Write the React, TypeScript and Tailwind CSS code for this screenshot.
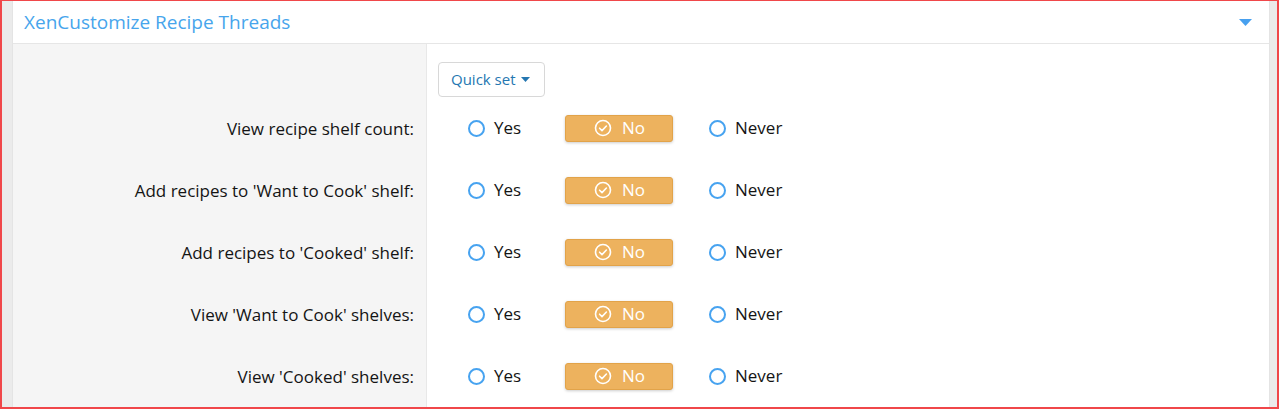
import React from 'react';

const rows = [
  "View recipe shelf count:",
  "Add recipes to 'Want to Cook' shelf:",
  "Add recipes to 'Cooked' shelf:",
  "View 'Want to Cook' shelves:",
  "View 'Cooked' shelves:",
];

const Radio = ({ label }: { label: string }) => (
  <div className="flex items-center gap-[9px]">
    <span className="w-[17px] h-[17px] rounded-full border-2 border-[#47a3f0] bg-white" />
    <span className="text-[#141414]">{label}</span>
  </div>
);

const CheckCircle = () => (
  <svg width="18" height="18" viewBox="0 0 18 18" fill="none" stroke="white" strokeWidth="1.6">
    <circle cx="9" cy="9" r="7.5" />
    <path d="M5.6 9.2l2.4 2.4 4.4-4.6" strokeLinecap="round" strokeLinejoin="round" />
  </svg>
);

const App = () => {
  return (
    <div
      className="w-[1279px] h-[409px] overflow-hidden bg-[#ebebeb] border-t border-l-2 border-r-2 border-b-2 border-[#f0474a] pl-[10px] pr-[7px]"
      style={{ fontFamily: '"Open Sans", "Noto Sans", sans-serif' }}
    >
      <div className="h-full bg-white border-x border-[#e4e4e4] flex flex-col">
        <div className="h-[43px] flex items-center justify-between border-b border-[#e6e6e6] pl-[11px] pr-[17px] shrink-0">
          <h2 className="text-[19px] text-[#47a5ec]">XenCustomize Recipe Threads</h2>
          <svg width="13" height="7" viewBox="0 0 13 7">
            <path d="M0 0h13L6.5 7z" fill="#47a0ef" />
          </svg>
        </div>
        <div className="flex flex-1 text-[17px]">
          <div className="w-[414px] bg-[#f5f5f5] border-r border-[#e8e8e8] flex flex-col pt-[54px] pr-[12px]">
            {rows.map((r) => (
              <div key={r} className="h-[62px] flex items-center justify-end text-[#141414]">
                {r}
              </div>
            ))}
          </div>
          <div className="flex-1 flex flex-col pt-[18px] pl-[11px]">
            <div className="h-[35px]">
              <button className="h-[35px] px-[12px] border border-[#d8d8d8] rounded-[4px] bg-white text-[#2577b1] text-[15px] flex items-center gap-[5px] w-[107px]">
                Quick set
                <svg width="9" height="5" viewBox="0 0 9 5">
                  <path d="M0 0h9L4.5 5z" fill="#2577b1" />
                </svg>
              </button>
            </div>
            {rows.map((r) => (
              <div key={r} className="h-[62px] flex items-center">
                <div className="ml-[30px] w-[97px]">
                  <Radio label="Yes" />
                </div>
                <div className="w-[108px] h-[27px] rounded-[3px] bg-[#edb25e] border border-[#e2a349] shadow-[0_1px_3px_rgba(0,0,0,0.2)] flex items-center gap-[10px] pl-[28px] text-white">
                  <CheckCircle />
                  <span>No</span>
                </div>
                <div className="ml-[36px]">
                  <Radio label="Never" />
                </div>
              </div>
            ))}
          </div>
        </div>
      </div>
    </div>
  );
};

export default App;
